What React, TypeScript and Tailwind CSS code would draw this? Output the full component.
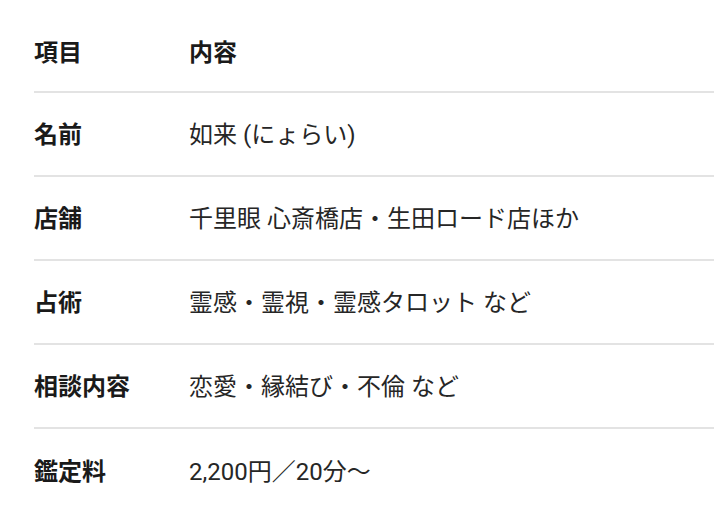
const rows: [string, string][] = [
  ["名前", "如来 (にょらい)"],
  ["店舗", "千里眼 心斎橋店・生田ロード店ほか"],
  ["占術", "霊感・霊視・霊感タロット など"],
  ["相談内容", "恋愛・縁結び・不倫 など"],
  ["鑑定料", "2,200円／20分〜"],
];

function Row({ label, value, head, last }: { label: string; value: string; head?: boolean; last?: boolean }) {
  return (
    <div
      className={`flex items-center h-[84px] ${head ? "pt-[6px]" : "pt-[2px]"} ${last ? "" : "border-b-2 border-[#e3e3e3]"}`}
    >
      <div className="w-[155px] shrink-0 font-bold text-[#1a1a1a]">{label}</div>
      <div className={`${head ? "font-bold text-[#1a1a1a]" : "text-[#262626]"}`}>{value}</div>
    </div>
  );
}

export default function App() {
  return (
    <div
      className="w-[714px] h-[524px] bg-white pt-[9px] pl-[34px] text-[24px] leading-none"
      style={{ fontFamily: 'Roboto, "Noto Sans CJK JP", sans-serif' }}
    >
      <Row label="項目" value="内容" head />
      {rows.map(([l, v], i) => (
        <Row key={l} label={l} value={v} last={i === rows.length - 1} />
      ))}
    </div>
  );
}
